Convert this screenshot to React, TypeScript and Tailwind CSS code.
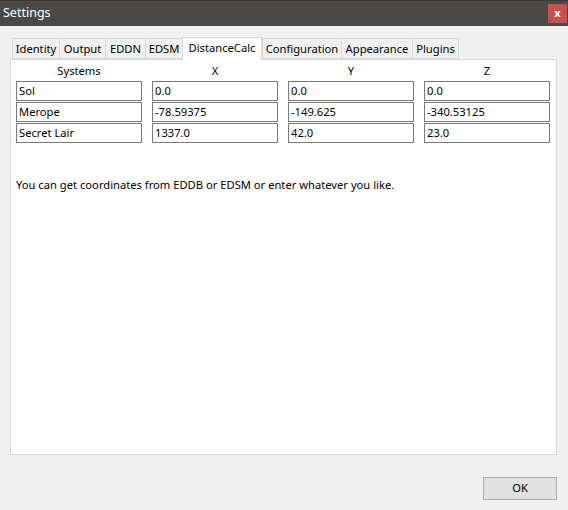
import React from "react";

const tabs = [
  { label: "Identity", w: "w-[47px]" },
  { label: "Output", w: "w-[46px]" },
  { label: "EDDN", w: "w-[40px]" },
  { label: "EDSM", w: "w-[37px]" },
  { label: "DistanceCalc", w: "w-[80px]", active: true },
  { label: "Configuration", w: "w-[79px]" },
  { label: "Appearance", w: "w-[71px]" },
  { label: "Plugins", w: "w-[47px]" },
];

const rows = [
  ["Sol", "0.0", "0.0", "0.0"],
  ["Merope", "-78.59375", "-149.625", "-340.53125"],
  ["Secret Lair", "1337.0", "42.0", "23.0"],
];

const headers = ["Systems", "X", "Y", "Z"];

const App = () => {
  return (
    <div className="w-[568px] h-[510px] bg-[#f0f0f0] flex flex-col text-[11.2px] text-black font-['Noto_Sans',sans-serif] overflow-hidden">
      {/* Title bar */}
      <div className="h-[26px] bg-[#4b4946] border-t border-[#3b3937] flex items-center justify-between pl-[3px] pr-[1px]">
        <span className="text-white text-[12.5px] leading-none">Settings</span>
        <div className="w-[19px] h-[19px] bg-[#c75050] flex items-center justify-center text-white text-[11px] font-bold leading-none pb-[2px]">
          x
        </div>
      </div>

      {/* Tabs */}
      <div className="flex items-end pl-[12px] pt-[10px] h-[33px]">
        {tabs.map((t) =>
          t.active ? (
            <div
              key={t.label}
              className={`${t.w} h-[23px] bg-white border border-b-0 border-[#d9d9d9] flex items-center justify-center -mb-px relative z-10 pb-[1px]`}
            >
              {t.label}
            </div>
          ) : (
            <div
              key={t.label}
              className={`${t.w} h-[21px] bg-[#f0f0f0] border border-r-0 border-[#d9d9d9] last:border-r flex items-center justify-center pt-[1px]`}
            >
              {t.label}
            </div>
          )
        )}
      </div>

      {/* Panel */}
      <div className="mx-[10px] w-[547px] h-[396px] bg-white border border-[#d9d9d9] flex flex-col pl-[5px] pt-[1px]">
        <div className="flex gap-[10px]">
          {headers.map((h) => (
            <div key={h} className="w-[126px] h-[20px] flex items-center justify-center">
              {h}
            </div>
          ))}
        </div>
        <div className="flex flex-col gap-[1px]">
          {rows.map((r) => (
            <div key={r[0]} className="flex gap-[10px]">
              {r.map((c, i) => (
                <div
                  key={i}
                  className="w-[126px] h-[20px] border border-[#7a7a7a] flex items-center pl-[2px]"
                >
                  {c}
                </div>
              ))}
            </div>
          ))}
        </div>
        <div className="mt-[34px]">
          You can get coordinates from EDDB or EDSM or enter whatever you like.
        </div>
      </div>

      {/* Footer */}
      <div className="flex justify-end pr-[11px] pt-[22px]">
        <button className="w-[74px] h-[23px] bg-[#e1e1e1] border border-[#adadad] flex items-center justify-center">
          OK
        </button>
      </div>
    </div>
  );
};

export default App;
